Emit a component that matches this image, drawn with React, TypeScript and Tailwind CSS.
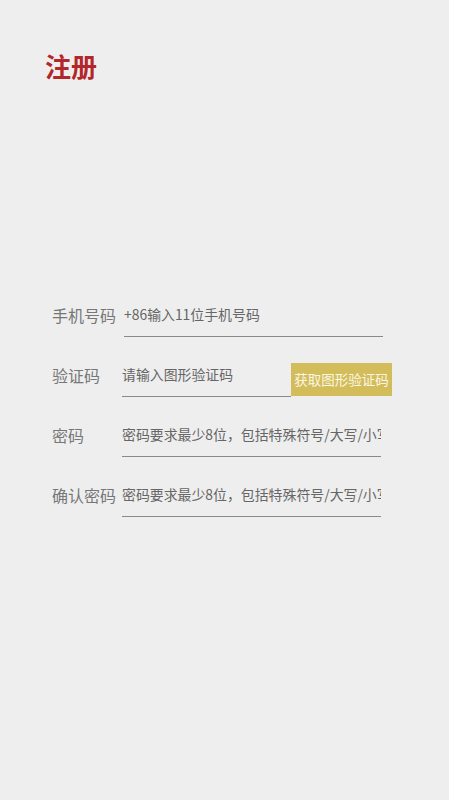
import React from "react";

const font = { fontFamily: '"Noto Sans CJK SC", "Noto Sans", sans-serif' };

function Row({
  label,
  placeholder,
  inputClass,
  children,
}: {
  label: string;
  placeholder: string;
  inputClass: string;
  children?: React.ReactNode;
}) {
  return (
    <div className="flex h-[45px] items-center">
      <div className="w-[70px] shrink-0 text-[16px] leading-none text-[#777777]">{label}</div>
      <input
        readOnly
        placeholder={placeholder}
        className={`h-[45px] shrink-0 border-b border-[#8a8a8a] bg-transparent p-0 text-[13.9px] outline-none placeholder:text-[#666666] ${inputClass}`}
        style={font}
      />
      {children}
    </div>
  );
}

export default function App() {
  return (
    <div className="min-h-[800px] w-full bg-[#eeeeee]" style={font}>
      <div className="pl-[45px] pt-[50px]">
        <h1 className="text-[26px] font-bold leading-[32px] text-[#b3262a]">注册</h1>
      </div>
      <div className="mt-[210px] flex flex-col gap-[15px] pl-[52px]">
        <Row label="手机号码" placeholder="+86输入11位手机号码" inputClass="ml-[2px] w-[259px]" />
        <Row label="验证码" placeholder="请输入图形验证码" inputClass="w-[169px]">
          <button
            className="mb-[1px] h-[33px] w-[101px] self-end bg-[#d3bd5b] text-[13.5px] leading-none text-[#fbf6e2]"
            style={font}
          >
            获取图形验证码
          </button>
        </Row>
        <Row label="密码" placeholder="密码要求最少8位，包括特殊符号/大写/小写" inputClass="w-[259px]" />
        <Row label="确认密码" placeholder="密码要求最少8位，包括特殊符号/大写/小写" inputClass="w-[259px]" />
      </div>
    </div>
  );
}
